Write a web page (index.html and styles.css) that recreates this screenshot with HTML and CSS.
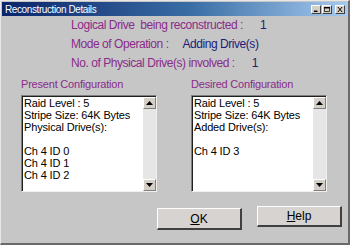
FILE: index.html
```html
<!DOCTYPE html>
<html>
<head>
	<title>Reconstruction Details</title>
	<link rel="stylesheet" href="styles.css">
</head>
<body>
	<div class="window">
		<div class="titlebar">
			<span class="title">Reconstruction Details</span>
			<div class="caption-buttons">
				<span class="cap"><svg width="8" height="7" viewBox="0 0 8 7"><rect x="1" y="5" width="5" height="2" fill="#000"/></svg></span>
				<span class="cap"><svg width="8" height="7" viewBox="0 0 8 7"><rect x="0.5" y="0.5" width="7" height="6" fill="none" stroke="#000"/><rect x="0" y="0" width="8" height="2" fill="#000"/></svg></span>
				<span class="cap close"><svg width="8" height="7" viewBox="0 0 8 7"><path d="M1 0 L7 7 M7 0 L1 7" stroke="#000" stroke-width="1.4"/></svg></span>
			</div>
		</div>

		<div class="info">
			<div class="row"><span class="label">Logical Drive&nbsp; being reconstructed :</span><span class="value v1">1</span></div>
			<div class="row"><span class="label">Mode of Operation :</span><span class="value v2">Adding Drive(s)</span></div>
			<div class="row"><span class="label">No. of Physical Drive(s) involved :</span><span class="value v3">1</span></div>
		</div>

		<div class="configs">
			<div class="config">
				<div class="config-title">Present Configuration</div>
				<div class="listbox">
					<div class="items">
						<div>Raid Level : 5</div>
						<div>Stripe Size: 64K Bytes</div>
						<div>Physical Drive(s):</div>
						<div>&nbsp;</div>
						<div>Ch 4 ID 0</div>
						<div>Ch 4 ID 1</div>
						<div>Ch 4 ID 2</div>
					</div>
					<div class="scrollbar">
						<span class="arrow"><svg width="7" height="4" viewBox="0 0 7 4"><path d="M3.5 0 L7 4 L0 4 Z" fill="#000"/></svg></span>
						<span class="track"></span>
						<span class="arrow"><svg width="7" height="4" viewBox="0 0 7 4"><path d="M0 0 L7 0 L3.5 4 Z" fill="#000"/></svg></span>
					</div>
				</div>
			</div>
			<div class="config">
				<div class="config-title">Desired Configuration</div>
				<div class="listbox">
					<div class="items">
						<div>Raid Level : 5</div>
						<div>Stripe Size: 64K Bytes</div>
						<div>Added Drive(s):</div>
						<div>&nbsp;</div>
						<div>Ch 4 ID 3</div>
					</div>
					<div class="scrollbar">
						<span class="arrow"><svg width="7" height="4" viewBox="0 0 7 4"><path d="M3.5 0 L7 4 L0 4 Z" fill="#000"/></svg></span>
						<span class="track"></span>
						<span class="arrow"><svg width="7" height="4" viewBox="0 0 7 4"><path d="M0 0 L7 0 L3.5 4 Z" fill="#000"/></svg></span>
					</div>
				</div>
			</div>
		</div>

		<div class="buttons">
			<button class="btn ok"><u>O</u>K</button>
			<button class="btn help"><u>H</u>elp</button>
		</div>
	</div>
</body>
</html>
```

FILE: styles.css
```css
body, html {
	margin: 0;
	padding: 0;
	background-color: #c6c6c6;
	font-family: "Liberation Sans", Arial, sans-serif;
}
.window {
	width: 350px;
	height: 245px;
	box-sizing: border-box;
	background-color: #c6c6c6;
	border-top: 1px solid #e8e8e8;
	border-left: 1px solid #e8e8e8;
	border-right: 2px solid #6a6a6a;
	border-bottom: 2px solid #6a6a6a;
	padding: 1px 1px 0 1px;
}
.titlebar {
	height: 14px;
	display: flex;
	align-items: center;
	justify-content: space-between;
	background: linear-gradient(to right, #0a246a 0%, #3a6ea5 55%, #a6caf0 100%);
	padding: 0 2px 0 3px;
}
.title {
	color: white;
	font-size: 10px;
	letter-spacing: -0.4px;
}
.caption-buttons {
	display: flex;
	gap: 1px;
}
.cap {
	width: 10px;
	height: 9px;
	background: #d4d0c8;
	border-top: 1px solid #fff;
	border-left: 1px solid #fff;
	border-right: 1px solid #404040;
	border-bottom: 1px solid #404040;
	box-sizing: border-box;
	display: flex;
	align-items: center;
	justify-content: center;
}
.cap svg { width: 6px; height: 5px; }
.cap.close { margin-left: 2px; }

.info {
	padding-left: 69px;
	font-size: 12px;
	letter-spacing: -0.45px;
}
.row {
	height: 19px;
	line-height: 19px;
	white-space: nowrap;
}
.label { color: #8a2b8a; }
.value { color: #1c1c78; }
.v1 { margin-left: 17px; }
.v2 { margin-left: 14px; }
.v3 { margin-left: 17px; }

.configs {
	display: flex;
	gap: 34px;
	padding-left: 19px;
	margin-top: 4px;
}
.config {
	width: 136px;
}
.config-title {
	color: #8a2b8a;
	font-size: 11px;
	letter-spacing: -0.2px;
	line-height: 14px;
	height: 14px;
	margin-bottom: 4px;
}
.listbox {
	height: 97px;
	box-sizing: border-box;
	background: white;
	border-top: 1px solid #808080;
	border-left: 1px solid #808080;
	border-right: 1px solid #f0f0f0;
	border-bottom: 1px solid #f0f0f0;
	box-shadow: inset 1px 1px 0 #202020;
	display: flex;
}
.items {
	flex: 1;
	padding: 1px 0 0 2px;
	font-size: 11px;
	letter-spacing: -0.15px;
	line-height: 12px;
	color: #000;
	white-space: nowrap;
	overflow: hidden;
}
.scrollbar {
	width: 13px;
	display: flex;
	flex-direction: column;
	background: #e6e6e6;
	margin-top: 1px;
}
.arrow {
	height: 12px;
	box-sizing: border-box;
	background: #d4d0c8;
	border-top: 1px solid #fff;
	border-left: 1px solid #fff;
	border-right: 1px solid #808080;
	border-bottom: 1px solid #808080;
	display: flex;
	align-items: center;
	justify-content: center;
}
.track { flex: 1; }

.buttons {
	display: flex;
	justify-content: flex-end;
	gap: 15px;
	padding-right: 5px;
	margin-top: 14px;
	align-items: flex-start;
}
.btn {
	font-family: "Liberation Sans", Arial, sans-serif;
	font-size: 12px;
	color: #000;
	width: 85px;
	height: 22px;
	padding: 0;
	background: #d6d3d0;
	border-top: 1px solid #fff;
	border-left: 1px solid #fff;
	border-right: 2px solid #404040;
	border-bottom: 2px solid #404040;
}
.btn.ok { margin-top: 2px; }
.btn.help { height: 21px; }
```
